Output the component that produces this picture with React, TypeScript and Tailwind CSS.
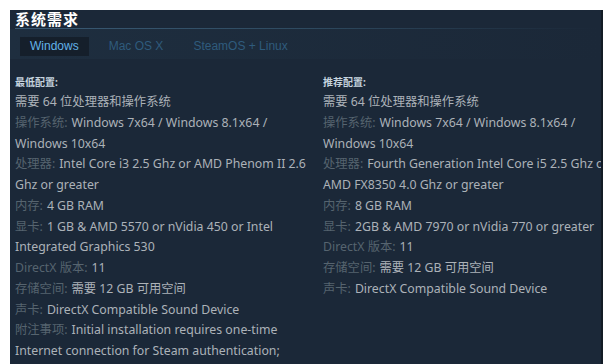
import React from 'react';

type Row = { label?: string; value: string };

const minimum: Row[] = [
  { value: '需要 64 位处理器和操作系统' },
  { label: '操作系统:', value: 'Windows 7x64 / Windows 8.1x64 / Windows 10x64' },
  { label: '处理器:', value: 'Intel Core i3 2.5 Ghz or AMD Phenom II 2.6 Ghz or greater' },
  { label: '内存:', value: '4 GB RAM' },
  { label: '显卡:', value: '1 GB & AMD 5570 or nVidia 450 or Intel Integrated Graphics 530' },
  { label: 'DirectX 版本:', value: '11' },
  { label: '存储空间:', value: '需要 12 GB 可用空间' },
  { label: '声卡:', value: 'DirectX Compatible Sound Device' },
  {
    label: '附注事项:',
    value:
      'Initial installation requires one-time Internet connection for Steam authentication; software installations required (included with the game) include DirectX and Visual C++ Redistributables',
  },
];

const recommended: Row[] = [
  { value: '需要 64 位处理器和操作系统' },
  { label: '操作系统:', value: 'Windows 7x64 / Windows 8.1x64 / Windows 10x64' },
  { label: '处理器:', value: 'Fourth Generation Intel Core i5 2.5 Ghz or AMD FX8350 4.0 Ghz or greater' },
  { label: '内存:', value: '8 GB RAM' },
  { label: '显卡:', value: '2GB & AMD 7970 or nVidia 770 or greater' },
  { label: 'DirectX 版本:', value: '11' },
  { label: '存储空间:', value: '需要 12 GB 可用空间' },
  { label: '声卡:', value: 'DirectX Compatible Sound Device' },
];

const tabs = ['Windows', 'Mac OS X', 'SteamOS + Linux'];

const SpecColumn: React.FC<{ title: string; rows: Row[]; wide?: boolean }> = ({ title, rows, wide }) => (
  <div className={wide ? 'w-[300px] min-w-[300px] max-w-[300px] shrink-0' : 'w-[296px] min-w-[296px] shrink-0'}>
    <div className="text-[10px] font-bold leading-[20px] text-[#c6d4df]">{title}</div>
    <ul>
      {rows.map((r, i) => (
        <li key={i} className="text-[12.3px] leading-[20.75px] text-[#acb2b8]">
          {r.label && <span className="text-[#56646f] mr-[4px]">{r.label}</span>}
          {r.value}
        </li>
      ))}
    </ul>
  </div>
);

export default function App() {
  return (
    <div className="min-h-screen bg-white pt-[10px] pl-[10px] font-['Noto_Sans','Noto_Sans_CJK_SC',sans-serif]">
      <div className="w-[593px] h-[354px] overflow-hidden bg-[#1b2838] border-r-2 border-[#121b25]">
        <div className="px-[5px]">
          <h2 className="text-[15px] font-bold leading-[18px] tracking-[1px] text-white">系统需求</h2>
          <div className="h-px bg-gradient-to-r from-[#3a5a74] via-[#2e4a60] to-[#1b2838]" />
        </div>
        <div className="bg-gradient-to-r from-[#1e2e3f] to-[#1b2838] px-[10px] pt-[8px] pb-[3px] flex font-['Liberation_Sans',sans-serif]">
          {tabs.map((t, i) => (
            <div
              key={t}
              className={
                i === 0
                  ? 'px-[10px] h-[19px] leading-[19px] text-[12px] bg-[#151f2b] text-[#62b3e8]'
                  : 'px-[10px] ml-[10px] h-[19px] leading-[19px] text-[12px] text-[#2f5b7c]'
              }
            >
              {t}
            </div>
          ))}
        </div>
        <div className="flex w-[700px] gap-[12px] px-[5px] pt-[13px]">
          <SpecColumn title="最低配置:" rows={minimum} />
          <SpecColumn title="推荐配置:" rows={recommended} wide />
        </div>
      </div>
    </div>
  );
}
